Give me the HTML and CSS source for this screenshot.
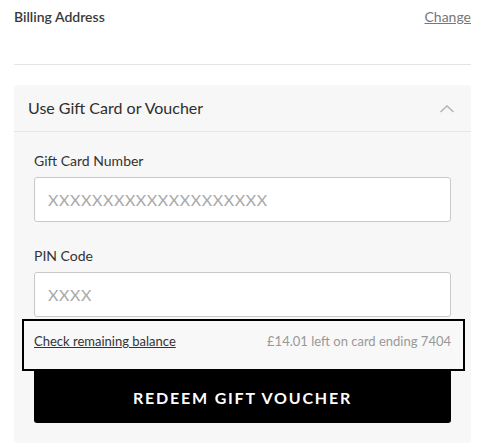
FILE: index.html
```html
<!DOCTYPE html>
<html lang="en">
<head>
    <meta charset="UTF-8">
    <meta name="viewport" content="width=device-width, initial-scale=1.0">
    <title>Checkout - Gift Card</title>
    <link rel="stylesheet" href="styles.css">
</head>
<body>

    <!-- Billing address -->
    <div class="billing">
        <span class="billing-title">Billing Address</span>
        <a href="#" class="change-link">Change</a>
    </div>

    <!-- Gift card panel -->
    <section class="voucher">
        <div class="voucher-head">
            <h2>Use Gift Card or Voucher</h2>
            <svg class="chevron" width="16" height="9" viewBox="0 0 16 9">
                <polyline points="1.5,8 8,2 14.5,8" fill="none" stroke="#b0b0b0" stroke-width="1.3"/>
            </svg>
        </div>

        <div class="voucher-body">
            <label class="field-label" for="card">Gift Card Number</label>
            <input class="field" id="card" type="text" placeholder="XXXXXXXXXXXXXXXXXXXX">

            <label class="field-label pin" for="pin">PIN Code</label>
            <input class="field" id="pin" type="text" placeholder="XXXX">

            <div class="balance">
                <a href="#" class="balance-link">Check remaining balance</a>
                <span class="balance-info">£14.01 left on card ending 7404</span>
            </div>

            <button class="redeem">REDEEM GIFT VOUCHER</button>
        </div>
    </section>

</body>
</html>
```

FILE: styles.css
```css
/* General */
body { font-family: Lato, "Open Sans", Arial, sans-serif; margin: 0; padding: 0 12px 0 14px; color: #333; background: #fff; }

/* Billing */
.billing { display: flex; justify-content: space-between; align-items: flex-start; height: 65px; padding-top: 8px; box-sizing: border-box; border-bottom: 1px solid #e4e4e4; }
.billing-title { font-size: 14px; font-weight: 600; color: #3a3a3a; letter-spacing: 0; }
.change-link { font-size: 14px; color: #777; text-decoration: underline; }

/* Voucher panel */
.voucher { margin-top: 20px; background: #f7f7f7; border-radius: 4px; }
.voucher-head { display: flex; justify-content: space-between; align-items: center; height: 46px; padding: 0 16px 0 14px; border-bottom: 1px solid #e6e6e6; }
.voucher-head h2 { margin: 0 0 2px; font-size: 16px; font-weight: 400; color: #2e2e2e; letter-spacing: 0; }
.chevron { display: block; margin-top: 1px; }

.voucher-body { display: flex; flex-direction: column; padding: 20px; }
.field-label { font-size: 14px; color: #333; line-height: 18px; margin-bottom: 7px; }
.field-label.pin { margin-top: 25px; }
.field { height: 45px; box-sizing: border-box; border: 1px solid #c9c9c9; border-radius: 3px; background: #fff; padding: 0 13px; font-family: inherit; font-size: 16px; }
.field::placeholder { color: #a9a9a9; letter-spacing: 0.6px; }

/* Balance row (highlighted) */
.balance { display: flex; justify-content: space-between; margin: 2px -14px 0 -12px; padding: 12px 12px 20px 10px; border: 2px solid #000; background: #f8f8f8; font-size: 13px; line-height: 16px; }
.balance-link { color: #333; text-decoration: underline; }
.balance-info { color: #999; }

/* Button */
.redeem { height: 52px; background: #000; color: #fff; border: none; border-radius: 0 0 3px 3px; font-family: inherit; font-size: 16px; font-weight: 700; letter-spacing: 1.8px; cursor: pointer; }
```
